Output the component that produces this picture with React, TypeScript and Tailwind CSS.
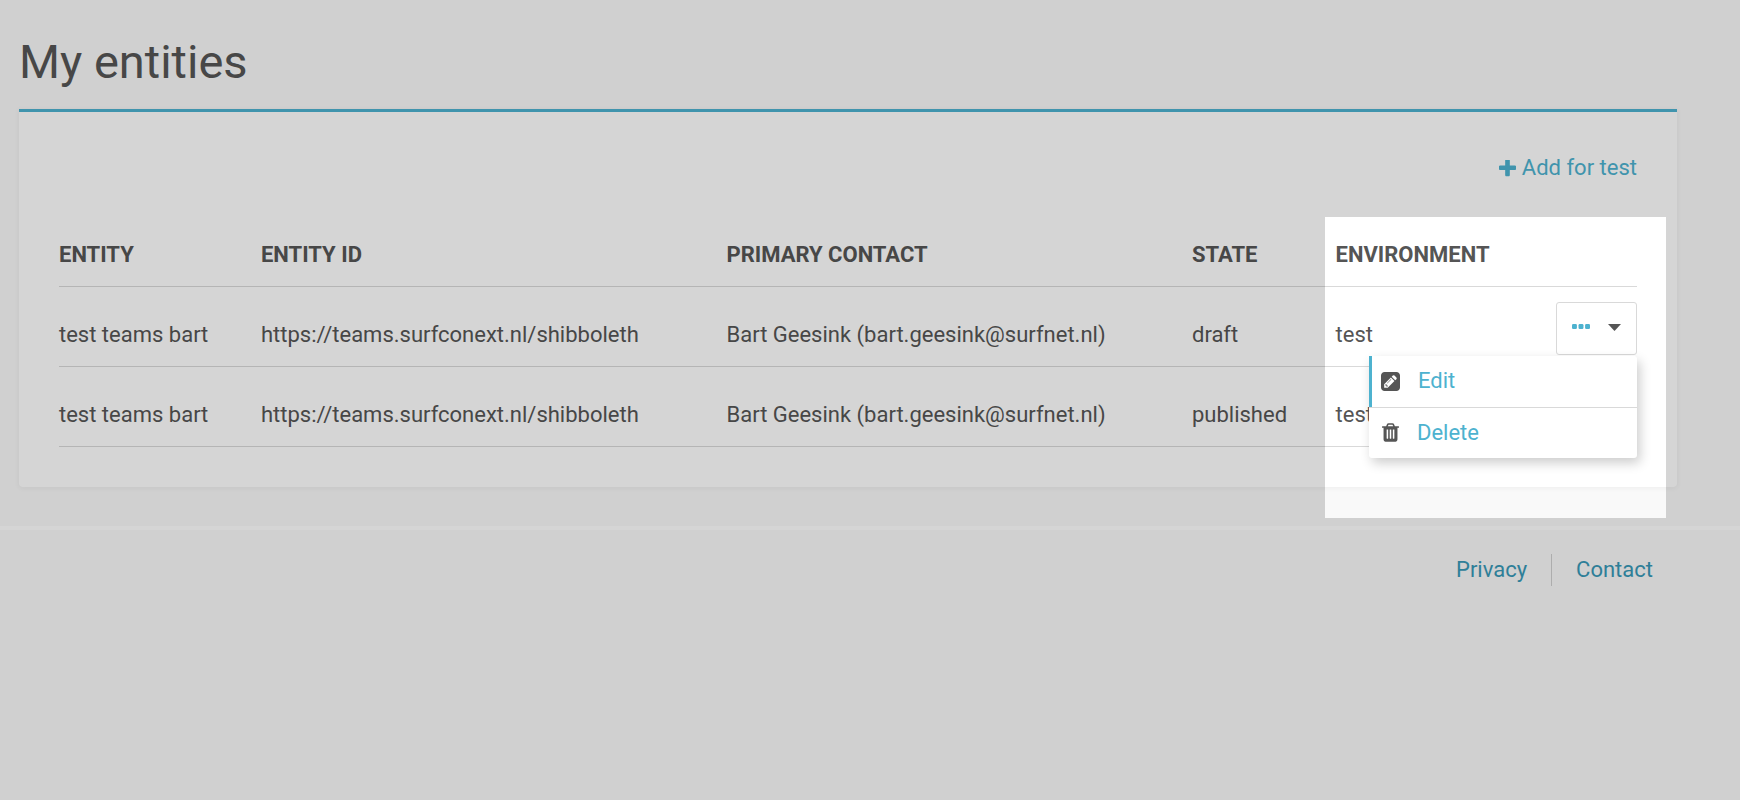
import { useState } from "react";

type Entity = {
  name: string;
  entityId: string;
  contact: string;
  state: string;
  environment: string;
};

const entities: Entity[] = [
  {
    name: "test teams bart",
    entityId: "https://teams.surfconext.nl/shibboleth",
    contact: "Bart Geesink (bart.geesink@surfnet.nl)",
    state: "draft",
    environment: "test",
  },
  {
    name: "test teams bart",
    entityId: "https://teams.surfconext.nl/shibboleth",
    contact: "Bart Geesink (bart.geesink@surfnet.nl)",
    state: "published",
    environment: "test",
  },
];

function PlusIcon() {
  return (
    <svg viewBox="192 192 1408 1408" className="size-[17px] fill-current" aria-hidden="true">
      <path d="M1600 736v192q0 40-28 68t-68 28h-416v416q0 40-28 68t-68 28h-192q-40 0-68-28t-28-68v-416h-416q-40 0-68-28t-28-68v-192q0-40 28-68t68-28h416v-416q0-40 28-68t68-28h192q40 0 68 28t28 68v416h416q40 0 68 28t28 68z" />
    </svg>
  );
}

function PencilSquareIcon() {
  return (
    <svg viewBox="0 128 1536 1536" className="size-[19px] fill-[#555555]" aria-hidden="true">
      <path d="M404 1108l152 152-52 52h-56v-96h-96v-56zm414-390q14 13-3 30l-291 291q-17 17-30 3-14-13 3-30l291-291q17-17 30-3zm-274 690l544-544-288-288-544 544v288h288zm608-608l92-92q28-28 28-68t-28-68l-152-152q-28-28-68-28t-68 28l-92 92zm384-384v960q0 119-84.5 203.5t-203.5 84.5h-960q-119 0-203.5-84.5t-84.5-203.5v-960q0-119 84.5-203.5t203.5-84.5h960q119 0 203.5 84.5t84.5 203.5z" />
    </svg>
  );
}

function TrashIcon() {
  return (
    <svg viewBox="192 128 1408 1536" className="h-[19px] w-[17px] fill-[#555555]" aria-hidden="true">
      <path d="M704 1376v-704q0-14-9-23t-23-9h-64q-14 0-23 9t-9 23v704q0 14 9 23t23 9h64q14 0 23-9t9-23zm256 0v-704q0-14-9-23t-23-9h-64q-14 0-23 9t-9 23v704q0 14 9 23t23 9h64q14 0 23-9t9-23zm256 0v-704q0-14-9-23t-23-9h-64q-14 0-23 9t-9 23v704q0 14 9 23t23 9h64q14 0 23-9t9-23zm-544-992h448l-48-117q-7-9-17-11h-317q-10 2-17 11zm928 32v64q0 14-9 23t-23 9h-96v948q0 83-47 143.5t-113 60.5h-832q-66 0-113-58.5t-47-141.5v-952h-96q-14 0-23-9t-9-23v-64q0-14 9-23t23-9h309l70-167q15-37 54-63t79-26h320q40 0 79 26t54 63l70 167h309q14 0 23 9t9 23z" />
    </svg>
  );
}

function ActionsMenu() {
  const [open, setOpen] = useState(true);
  return (
    <div className="relative">
      <button
        type="button"
        aria-label="Actions"
        aria-expanded={open}
        onClick={() => setOpen(!open)}
        className="flex h-[53px] w-[81px] items-center justify-between rounded-[3px] border border-[#d9d9d9] bg-white px-[15px] pb-[3px]"
      >
        <svg viewBox="0 0 1408 384" className="h-[5px] w-[18px] fill-[#4db2cf]" aria-hidden="true">
          <rect width="384" height="384" rx="96" />
          <rect x="512" width="384" height="384" rx="96" />
          <rect x="1024" width="384" height="384" rx="96" />
        </svg>
        <svg viewBox="0 0 13 7" className="mt-[2px] h-[7px] w-[13px] fill-[#555555]" aria-hidden="true">
          <path d="M0 0h13L6.500 7z" />
        </svg>
      </button>
      {open && (
        <ul className="absolute top-full right-0 z-10 mt-px w-[268px] rounded-[3px] bg-white shadow-[3px_5px_12px_rgba(0,0,0,0.2)]">
          <li className="border-l-3 border-[#4db2cf]">
            <a href="#edit" className="flex h-[51px] items-center gap-[18px] pl-[9px] text-[#4db2cf]">
              <PencilSquareIcon />
              Edit
            </a>
          </li>
          <li className="border-t border-[#d9d9d9]">
            <a href="#delete" className="flex h-[50px] items-center gap-[18px] pl-[13px] text-[#4db2cf]">
              <TrashIcon />
              Delete
            </a>
          </li>
        </ul>
      )}
    </div>
  );
}

export default function App() {
  return (
    <div className="relative min-h-screen overflow-hidden bg-[#f9f9f9] font-[Roboto,sans-serif] text-[22px] leading-8 text-[#555555]">
      <main className="pt-8 pr-[63px] pb-[39px] pl-[19px]">
        <h1 className="mb-[17px] text-[47px] leading-[60px]">My entities</h1>

        <section className="relative rounded-b-[4px] border-t-3 border-[#4db2cf] bg-white px-10 py-10 shadow-[0_1px_5px_1px_rgba(0,0,0,0.04)]">
          <div className="flex justify-end">
            <a href="#add" className="flex items-center gap-[6px] text-[#4db2cf]">
              <PlusIcon />
              Add for test
            </a>
          </div>

          <table className="mt-[22px] w-full table-fixed border-collapse text-left">
            <thead>
              <tr className="h-20 border-b border-[#d9d9d9] align-bottom uppercase">
                <th scope="col" className="w-[12.8%] pb-[15px]">Entity</th>
                <th scope="col" className="w-[29.5%] pb-[15px]">Entity ID</th>
                <th scope="col" className="w-[29.5%] pb-[15px]">Primary contact</th>
                <th scope="col" className="w-[9.1%] pb-[15px]">State</th>
                <th scope="col" className="pb-[15px]">Environment</th>
              </tr>
            </thead>
            <tbody>
              {entities.map((entity, index) => (
                <tr key={index} className="h-20 border-b border-[#d9d9d9] align-bottom">
                  <td className="pb-[15px]">{entity.name}</td>
                  <td className="pb-[15px]">{entity.entityId}</td>
                  <td className="pb-[15px]">{entity.contact}</td>
                  <td className="pb-[15px]">{entity.state}</td>
                  <td className="pb-[11px]">
                    <div className="flex items-end justify-between">
                      <span className="pb-1">{entity.environment}</span>
                      {index === 0 && <ActionsMenu />}
                    </div>
                  </td>
                </tr>
              ))}
            </tbody>
          </table>

          {/* Spotlight: its spread shadow dims everything outside the box. */}
          <div className="pointer-events-none absolute top-[105px] right-[11px] -bottom-[31px] z-20 w-[341px] shadow-[0_0_0_9999px_rgba(0,0,0,0.165)]" />
        </section>
      </main>

      <footer className="flex justify-end border-t-4 border-white pt-6 pr-[87px] text-[#3898b7]">
        <a href="#privacy" className="border-r border-[#d0d0d0] pr-6">Privacy</a>
        <a href="#contact" className="pl-6">Contact</a>
      </footer>
    </div>
  );
}
